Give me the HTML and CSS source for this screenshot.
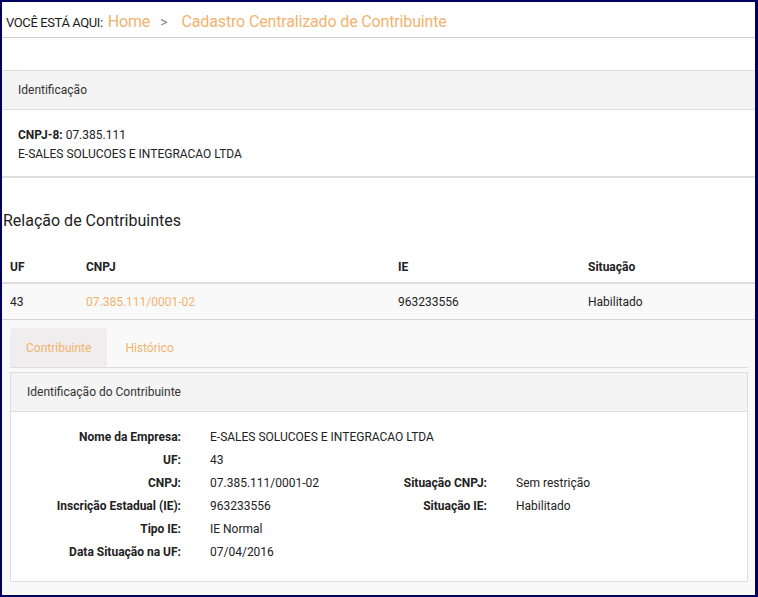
FILE: index.html
```html
<!DOCTYPE html>
<html lang="pt-BR">

<head>
    <meta charset="UTF-8">
    <meta name="viewport" content="width=device-width, initial-scale=1.0">
    <title>Cadastro Centralizado de Contribuinte</title>
    <link rel="stylesheet" href="styles.css">
</head>

<body>
    <div class="frame">
        <div class="crumbs">
            <span class="here">VOCÊ ESTÁ AQUI:</span>
            <a class="crumb">Home</a>
            <span class="sep">&gt;</span>
            <a class="crumb">Cadastro Centralizado de Contribuinte</a>
        </div>

        <div class="card top-card">
            <div class="card-head">Identificação</div>
            <div class="card-body">
                <div><b>CNPJ-8:</b> 07.385.111</div>
                <div>E-SALES SOLUCOES E INTEGRACAO LTDA</div>
            </div>
        </div>

        <h2 class="title">Relação de Contribuintes</h2>

        <table class="list">
            <thead>
                <tr>
                    <th class="c-uf">UF</th>
                    <th class="c-cnpj">CNPJ</th>
                    <th class="c-ie">IE</th>
                    <th>Situação</th>
                </tr>
            </thead>
            <tbody>
                <tr>
                    <td>43</td>
                    <td><a class="link">07.385.111/0001-02</a></td>
                    <td>963233556</td>
                    <td>Habilitado</td>
                </tr>
            </tbody>
        </table>

        <div class="detail">
            <div class="tabs">
                <div class="tab active">Contribuinte</div>
                <div class="tab">Histórico</div>
            </div>
            <div class="card inner-card">
                <div class="card-head">Identificação do Contribuinte</div>
                <div class="fields">
                    <div class="lbl">Nome da Empresa:</div>
                    <div class="val wide">E-SALES SOLUCOES E INTEGRACAO LTDA</div>

                    <div class="lbl">UF:</div>
                    <div class="val wide">43</div>

                    <div class="lbl">CNPJ:</div>
                    <div class="val">07.385.111/0001-02</div>
                    <div class="lbl">Situação CNPJ:</div>
                    <div class="val">Sem restrição</div>

                    <div class="lbl">Inscrição Estadual (IE):</div>
                    <div class="val">963233556</div>
                    <div class="lbl">Situação IE:</div>
                    <div class="val">Habilitado</div>

                    <div class="lbl">Tipo IE:</div>
                    <div class="val wide">IE Normal</div>

                    <div class="lbl">Data Situação na UF:</div>
                    <div class="val wide">07/04/2016</div>
                </div>
            </div>
        </div>
    </div>
</body>
</html>
```

FILE: styles.css
```css
* {
    margin: 0;
    box-sizing: border-box;
    padding: 0;
}

body {
    font-family: Roboto, "Liberation Sans", sans-serif;
    font-size: 12px;
    color: #222;
    background: #fff;
}

.frame {
    display: flex;
    flex-direction: column;
    height: 597px;
    border: 2px solid #000062;
    border-right-width: 3px;
    overflow: hidden;
}

.crumbs {
    display: flex;
    align-items: baseline;
    height: 36px;
    padding: 10px 0 0 4px;
    border-bottom: 1px solid #cfcfcf;
}

.here {
    font-size: 13px;
    color: #1a1a1a;
    letter-spacing: -0.4px;
    margin-right: 5px;
}

.crumb {
    font-size: 16px;
    letter-spacing: -0.15px;
    color: #f2b36f;
}

.sep {
    font-size: 14px;
    color: #888;
    margin: 0 14px 0 10px;
}

.card {
    background: #fff;
    border: 1px solid #dedede;
}

.card-head {
    height: 39px;
    padding: 12px 16px 0;
    background: #f4f4f4;
    border-bottom: 1px solid #dedede;
    color: #333;
}

.top-card {
    margin-top: 32px;
    border-left: 0;
    border-right: 0;
    border-bottom-width: 2px;
}

.card-body {
    height: 66px;
    padding: 16px 16px 0;
    line-height: 19px;
}

.title {
    font-size: 16px;
    font-weight: normal;
    color: #222;
    margin: 33px 0 0 1px;
    height: 22px;
}

.list {
    width: 100%;
    border-collapse: collapse;
    margin-top: 15px;
}

.list th {
    height: 35px;
    padding: 4px 8px 0;
    text-align: left;
    font-weight: bold;
    border-bottom: 2px solid #dddddd;
}

.list td {
    height: 36px;
    padding: 2px 8px 0;
    background: #f9f9f9;
    border-bottom: 1px solid #d4d4d4;
}

.c-uf {
    width: 76px;
}

.c-cnpj {
    width: 312px;
}

.c-ie {
    width: 190px;
}

.link {
    color: #f2b36f;
}

.detail {
    flex: 1;
    background: #f9f9f9;
    padding: 8px 7px 0 8px;
}

.tabs {
    display: flex;
    height: 40px;
    border-bottom: 1px solid #dddddd;
}

.tab {
    padding: 13px 16px 0;
    color: #f2b36f;
    margin-right: 2px;
}

.tab.active {
    background: #efeded;
    border-radius: 4px 4px 0 0;
}

.inner-card {
    margin-top: 4px;
}

.fields {
    display: grid;
    grid-template-columns: 170px 150px 98px 1fr;
    grid-auto-rows: 23px;
    column-gap: 29px;
    align-items: center;
    padding: 14px 0 17px;
}

.lbl {
    text-align: right;
    font-weight: bold;
}

.val.wide {
    grid-column: span 3;
}
```
